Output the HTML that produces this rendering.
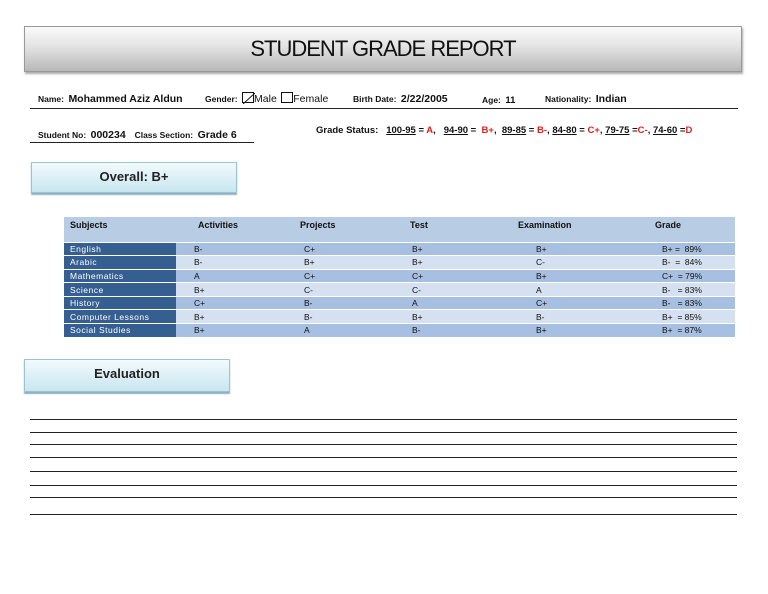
<!DOCTYPE html>
<html><head><meta charset="utf-8"><style>
*{margin:0;padding:0;box-sizing:border-box}
body{width:768px;height:594px;background:#fff;position:relative;font-family:"Liberation Sans",sans-serif;color:#111;overflow:hidden}
.a{position:absolute;white-space:nowrap}
.t{left:24px;top:26px;width:718px;height:46px;background:linear-gradient(#fafafa,#e6e6e6 40%,#b8b8b8);border:1px solid #999;box-shadow:1px 2px 2px #aaa;text-align:center;font-size:22px;line-height:44px;letter-spacing:-1px}
.l{font-size:8.5px;font-weight:bold}
.v{font-size:10.5px;font-weight:bold}
.hr{position:absolute;height:1px;background:#222}
.btn{background:linear-gradient(#f2fafd,#c8e6ef);border:1px solid #9cc3d3;box-shadow:0 2px 1px #8fb0c0;text-align:center;font-size:13px;font-weight:bold;color:#222}
.r{color:#e0201d}
u{text-decoration:underline}
table{position:absolute;left:64px;top:217px;width:671px;border-collapse:collapse;font-size:8.5px;table-layout:fixed}
td{height:13.6px;padding:0;border-bottom:1px solid #fff;overflow:hidden;white-space:nowrap}
tr.h td{height:25px;vertical-align:top;padding-top:3px;font-weight:bold;background:#b8cce4;font-size:9px}
tr.d td{background:#a7bfe0}
tr.e td{background:#d5e0f0}
td.s{background:#365f91!important;color:#fff;letter-spacing:.5px;padding-left:6px}
tr.h td:nth-child(1){padding-left:6px}
tr.h td:nth-child(2){padding-left:22px}
tr.h td:nth-child(3){padding-left:10px}
tr.h td:nth-child(4){padding-left:10px}
tr.h td:nth-child(5){padding-left:18px}
tr.h td:nth-child(6){padding-left:35px}
tr.d td:nth-child(2),tr.e td:nth-child(2){padding-left:18px}
tr.d td:nth-child(3),tr.e td:nth-child(3){padding-left:14px}
tr.d td:nth-child(4),tr.e td:nth-child(4){padding-left:12px}
tr.d td:nth-child(5),tr.e td:nth-child(5){padding-left:36px}
tr.d td:nth-child(6),tr.e td:nth-child(6){padding-left:42px}
.box{display:inline-block;width:12px;height:11px;border:1px solid #111;vertical-align:-1px;position:relative}
</style></head><body>
<div class="a t">STUDENT GRADE REPORT</div>

<div class="a" style="left:38px;top:89px"><span class="l">Name:</span> <span class="v">Mohammed Aziz Aldun</span></div>
<div class="a" style="left:205px;top:89px"><span class="l">Gender:</span> <span class="box"><svg width="12" height="11" style="position:absolute;left:0;top:0"><line x1="0" y1="11" x2="12" y2="0" stroke="#111"/></svg></span><span class="v" style="font-weight:normal;font-size:10.5px">Male</span> <span class="box"></span><span class="v" style="font-weight:normal">Female</span></div>
<div class="a" style="left:353px;top:89px"><span class="l">Birth Date:</span> <span class="v">2/22/2005</span></div>
<div class="a" style="left:482px;top:90px"><span class="l">Age:</span> <span class="v" style="font-size:9.5px">11</span></div>
<div class="a" style="left:545px;top:89px"><span class="l">Nationality:</span> <span class="v">Indian</span></div>
<div class="hr" style="left:30px;top:108px;width:708px"></div>

<div class="a" style="left:38px;top:125px"><span class="l">Student No:</span> <span class="v">000234</span> &nbsp;<span class="l">Class Section:</span> <span class="v">Grade 6</span></div>
<div class="hr" style="left:30px;top:142px;width:224px"></div>
<div class="a" style="left:316px;top:125px;font-size:9.5px;font-weight:bold">Grade Status: &nbsp;&nbsp;<u>100-95</u> = <span class="r">A</span>, &nbsp;&nbsp;<u>94-90</u> = &nbsp;<span class="r">B+</span>, &nbsp;<u>89-85</u> = <span class="r">B-</span>, <u>84-80</u> = <span class="r">C+</span>, <u>79-75</u> =<span class="r">C-</span>, <u>74-60</u> =<span class="r">D</span></div>

<div class="a btn" style="left:31px;top:162px;width:206px;height:31px;line-height:28px">Overall: B+</div>

<table>
<colgroup><col style="width:112px"><col style="width:114px"><col style="width:110px"><col style="width:100px"><col style="width:120px"><col style="width:115px"></colgroup>
<tr class="h"><td>Subjects</td><td>Activities</td><td>Projects</td><td>Test</td><td>Examination</td><td>Grade</td></tr>
<tr class="d"><td class="s">English</td><td>B-</td><td>C+</td><td>B+</td><td>B+</td><td>B+ = &nbsp;89%</td></tr>
<tr class="e"><td class="s">Arabic</td><td>B-</td><td>B+</td><td>B+</td><td>C-</td><td>B- &nbsp;= &nbsp;84%</td></tr>
<tr class="d"><td class="s">Mathematics</td><td>A</td><td>C+</td><td>C+</td><td>B+</td><td>C+ &nbsp;= 79%</td></tr>
<tr class="e"><td class="s">Science</td><td>B+</td><td>C-</td><td>C-</td><td>A</td><td>B- &nbsp;&nbsp;= 83%</td></tr>
<tr class="d"><td class="s">History</td><td>C+</td><td>B-</td><td>A</td><td>C+</td><td>B- &nbsp;&nbsp;= 83%</td></tr>
<tr class="e"><td class="s">Computer Lessons</td><td>B+</td><td>B-</td><td>B+</td><td>B-</td><td>B+ &nbsp;= 85%</td></tr>
<tr class="d"><td class="s">Social Studies</td><td>B+</td><td>A</td><td>B-</td><td>B+</td><td>B+ &nbsp;= 87%</td></tr>
</table>

<div class="a btn" style="left:24px;top:359px;width:206px;height:33px;line-height:28px">Evaluation</div>

<div class="hr" style="left:30px;top:419px;width:707px"></div>
<div class="hr" style="left:30px;top:432px;width:707px"></div>
<div class="hr" style="left:30px;top:444px;width:707px"></div>
<div class="hr" style="left:30px;top:457px;width:707px"></div>
<div class="hr" style="left:30px;top:471px;width:707px"></div>
<div class="hr" style="left:30px;top:485px;width:707px"></div>
<div class="hr" style="left:30px;top:497px;width:707px"></div>
<div class="hr" style="left:30px;top:514px;width:707px"></div>
</body></html>
